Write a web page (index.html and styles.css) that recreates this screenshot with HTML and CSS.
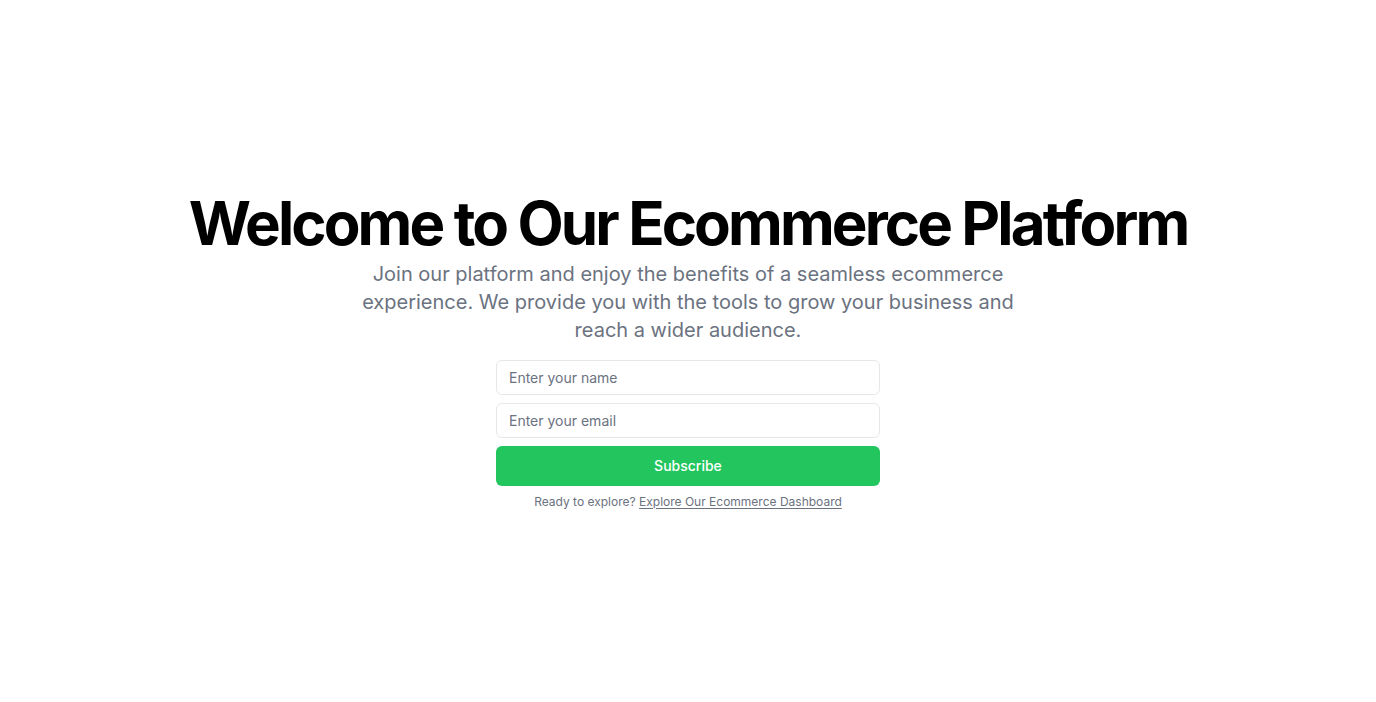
FILE: index.html
```html
<!DOCTYPE html>
<html lang="en">
<head>
<meta charset="utf-8">
<title>Welcome to Our Ecommerce Platform</title>
<link rel="stylesheet" href="styles.css">
</head>
<body>
<main class="hero">
  <div class="hero-inner">
    <div class="intro">
      <h1 class="title">Welcome to Our Ecommerce Platform</h1>
      <p class="lead">Join our platform and enjoy the benefits of a seamless ecommerce experience. We provide you with the tools to grow your business and reach a wider audience.</p>
    </div>
    <div class="signup">
      <form class="form">
        <input class="field" type="text" placeholder="Enter your name">
        <input class="field" type="email" placeholder="Enter your email">
        <button class="btn" type="submit">Subscribe</button>
      </form>
      <p class="note">Ready to explore? <a class="note-link" href="#">Explore Our Ecommerce Dashboard</a></p>
    </div>
  </div>
</main>
</body>
</html>
```
FILE: styles.css
```css
* { box-sizing: border-box; }
html, body { margin: 0; padding: 0; }
body {
  font-family: Inter, "Noto Sans", sans-serif;
  background: #ffffff;
  color: #000;
}
.hero {
  min-height: 702px;
  display: flex;
  align-items: center;
  justify-content: center;
}
.hero-inner {
  display: flex;
  flex-direction: column;
  align-items: center;
  gap: 16px;
  text-align: center;
}
.intro {
  display: flex;
  flex-direction: column;
  align-items: center;
  gap: 7px;
}
.title {
  margin: 0;
  font-size: 60px;
  line-height: 1;
  font-weight: 700;
  letter-spacing: -2.88px;
}
.lead {
  margin: 0;
  max-width: 700px;
  font-size: 20px;
  line-height: 28px;
  color: #6b7280;
}
.signup {
  width: 384px;
  display: flex;
  flex-direction: column;
  gap: 8px;
}
.form {
  display: flex;
  flex-direction: column;
  gap: 8px;
}
.field {
  height: 35px;
  width: 100%;
  border: 1px solid #e5e7eb;
  border-radius: 6px;
  padding: 0 12px;
  font-family: inherit;
  font-size: 14px;
  color: #111827;
  background: #fff;
  outline: none;
}
.field::placeholder { color: #6b7280; }
.btn {
  height: 40px;
  width: 100%;
  border: 0;
  border-radius: 6px;
  background: #22c55e;
  color: #fff;
  font-family: inherit;
  font-size: 14px;
  font-weight: 500;
}
.note {
  margin: 0;
  font-size: 12px;
  line-height: 16px;
  color: #6b7280;
}
.note-link {
  color: #6b7280;
  text-decoration: underline;
  text-underline-offset: 2px;
}
```
